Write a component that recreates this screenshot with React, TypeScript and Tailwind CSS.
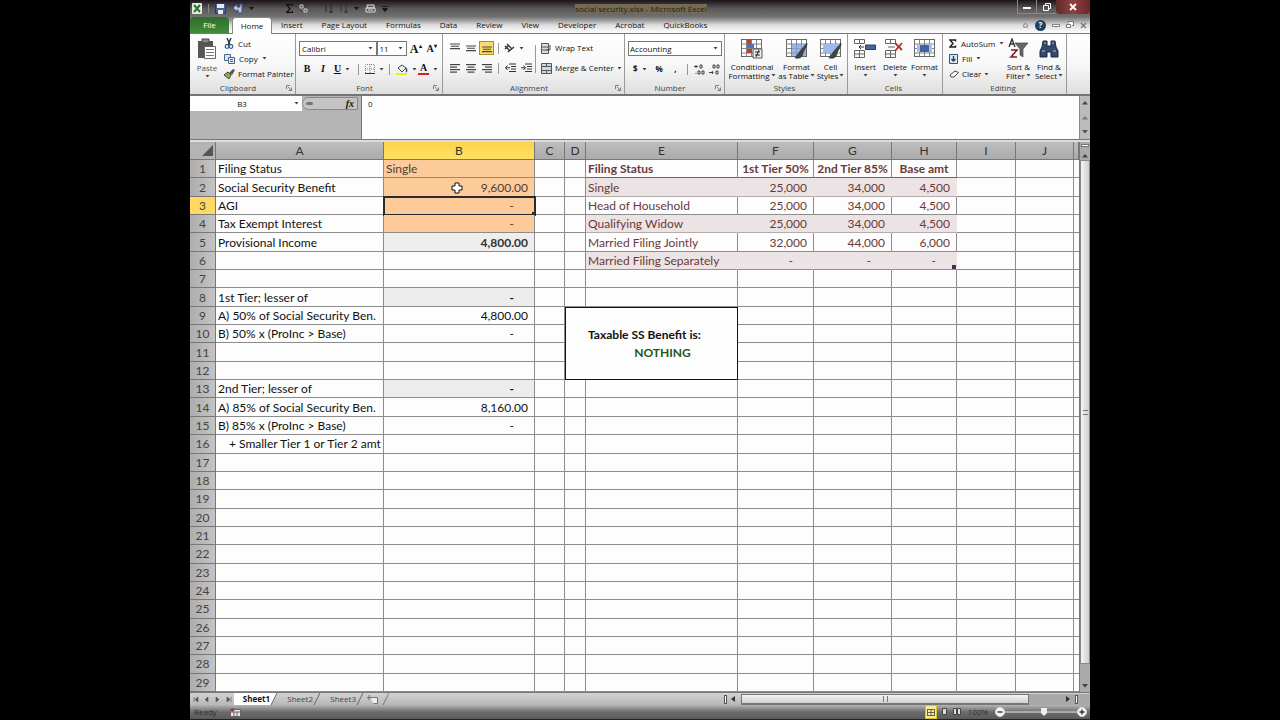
import { useState } from "react";
import type { ReactNode } from "react";

type Row = { a?: string; b?: string; table?: [string, string, string, string] };

const tabs = ["Insert", "Page Layout", "Formulas", "Data", "Review", "View", "Developer", "Acrobat", "QuickBooks"];
const columns = ["A", "B", "C", "D", "E", "F", "G", "H", "I", "J", ""];

const rows: Row[] = [
  { a: "Filing Status", b: "Single", table: ["Filing Status", "1st Tier 50%", "2nd Tier 85%", "Base amt"] },
  { a: "Social Security Benefit", b: "9,600.00", table: ["Single", "25,000", "34,000", "4,500"] },
  { a: "AGI", b: "-", table: ["Head of Household", "25,000", "34,000", "4,500"] },
  { a: "Tax Exempt Interest", b: "-", table: ["Qualifying Widow", "25,000", "34,000", "4,500"] },
  { a: "Provisional Income", b: "4,800.00", table: ["Married Filing Jointly", "32,000", "44,000", "6,000"] },
  { table: ["Married Filing Separately", "-", "-", "-"] },
  {},
  { a: "1st Tier; lesser of", b: "-" },
  { a: "A) 50% of Social Security Ben.", b: "4,800.00" },
  { a: "B) 50% x (ProInc > Base)", b: "-" },
  {},
  {},
  { a: "2nd Tier; lesser of", b: "-" },
  { a: "A) 85% of Social Security Ben.", b: "8,160.00" },
  { a: "B) 85% x (ProInc > Base)", b: "-" },
  { a: "+ Smaller Tier 1 or Tier 2 amt" },
  ...Array.from({ length: 13 }, () => ({})),
];

function Svg({ w, h, box, children }: { w: number; h: number; box?: string; children: ReactNode }) {
  return (
    <svg width={w} height={h} viewBox={box ?? `0 0 ${w} ${h}`} fill="none" className="shrink-0" aria-hidden="true">
      {children}
    </svg>
  );
}

function Caret() {
  return (
    <Svg w={5} h={3}>
      <path d="M0.5 0h4L2.5 2.5z" fill="#444" />
    </Svg>
  );
}

function Launcher() {
  return (
    <Svg w={6} h={6}>
      <path d="M0.5 4V0.5H4M2 2l3 3M5.500 2.500v3h-3" stroke="#666" strokeWidth="0.8" />
    </Svg>
  );
}

function Lines({ rows: widths, align }: { rows: number[]; align: "left" | "center" | "right" }) {
  return (
    <Svg w={10} h={10}>
      {widths.map((w, i) => {
        const x = align === "left" ? 0 : align === "right" ? 10 - w : (10 - w) / 2;
        return <rect key={i} x={x} y={1 + i * 2.5} width={w} height="1.2" fill="#444" />;
      })}
    </Svg>
  );
}

function VAlign({ y }: { y: number }) {
  return (
    <Svg w={10} h={10}>
      <path d={`M0 ${y}h10M1 ${y + 2.3}h8M0 ${y + 4.6}h10`} stroke="#444" strokeWidth="1.1" />
    </Svg>
  );
}

function Grid({ children }: { children?: ReactNode }) {
  return (
    <Svg w={22} h={20}>
      <rect x="0.5" y="0.5" width="20" height="17" fill="#fff" stroke="#666" />
      <path d="M0 5h21M0 9.500h21M0 14h21M5.500 0v18M10.500 0v18M15.500 0v18" stroke="#777" strokeWidth="0.9" />
      {children}
    </Svg>
  );
}

function Brush() {
  return <path d="M21 4l-7 8-5 7c5 1 8-1 8-5l4-8z" fill="#444" stroke="#222" strokeWidth="0.5" />;
}

function Group({ label, width, launcher, children }: { label: string; width: string; launcher?: boolean; children: ReactNode }) {
  return (
    <section aria-label={label} className={`flex shrink-0 flex-col border-r border-[#9a9a9a] ${width}`}>
      <div className="min-h-0 flex-1">{children}</div>
      <div className="flex h-[12px] items-center justify-center pr-[3px]">
        <span className="flex-1 text-center leading-[12px] text-[#444]">{label}</span>
        {launcher ? <Launcher /> : null}
      </div>
    </section>
  );
}

function Tool({ label, children, className = "" }: { label: string; children: ReactNode; className?: string }) {
  return (
    <button type="button" aria-label={label} className={`flex h-[14px] items-center justify-center gap-[4px] ${className}`}>
      {children}
    </button>
  );
}

function BigButton({ icon, lines, className = "" }: { icon: ReactNode; lines: string[]; className?: string }) {
  return (
    <button type="button" className={`flex flex-col items-center pt-[4px] leading-[9px] ${className}`}>
      <span className="mb-[3px] flex h-[21px] items-center">{icon}</span>
      <span>{lines[0]}</span>
      <span className="flex h-[9px] items-center gap-px whitespace-nowrap">
        {lines[1]}
        <Caret />
      </span>
    </button>
  );
}

function TitleBar() {
  return (
    <header className="flex h-[17px] shrink-0 items-center bg-gradient-to-b from-[#1c141b] via-[#5a5759] to-[#727272] text-[8px]">
      <div className="flex flex-1 items-center gap-[6px] pl-[2px]">
        <Svg w={10} h={11}>
          <rect width="10" height="11" rx="1" fill="#e4efe2" />
          <path d="M2 2l6 7M8 2L2 9" stroke="#28762b" strokeWidth="2" />
        </Svg>
        <span className="h-[9px] w-px bg-[#888]" />
        <Svg w={11} h={11}>
          <rect x="0.5" y="0.5" width="10" height="10" fill="#4b5f9c" stroke="#2a376a" />
          <path d="M2 1h7v4H2zM3 7h5v4H3z" fill="#e8ebf5" />
        </Svg>
        <Svg w={11} h={11}>
          <path d="M1 5l4-4v3h3V1h2v9H6V7H5v2z" fill="#b9c3df" stroke="#3f4d80" />
        </Svg>
        <Svg w={5} h={3}><path d="M0 0h5L2.500 3z" fill="#111" /></Svg>
        <span className="w-[20px]" />
        <Svg w={7} h={9}>
          <path d="M6.500 2V0.700H0.800L4 4.500 0.800 8.300h5.700V7" stroke="#111" strokeWidth="1.3" />
        </Svg>
        <Svg w={9} h={9}>
          <path d="M1 1h3v3H1zM5 5h3v3H5z" stroke="#ccc" />
          <path d="M5 1l3 2M1 6l2 2" stroke="#333" />
        </Svg>
        <span className="w-[4px]" />
        <Svg w={9} h={10}>
          <path d="M2 1v7M7 0v8M5 7l2 2 2-2" stroke="#222" />
        </Svg>
        <Svg w={9} h={10}>
          <path d="M2 2v6M7 0v8M5 7l2 2 2-2" stroke="#333" />
        </Svg>
        <Svg w={5} h={3}><path d="M0 0h5L2.500 3z" fill="#111" /></Svg>
        <Svg w={11} h={10}>
          <path d="M2 1h7v3H2zM1 4h9v4H1zM3 6h5" stroke="#ddd" fill="#555" />
        </Svg>
        <Svg w={6} h={6}><path d="M0 0.500h6M0.500 2.500h5L3 5.500z" fill="#111" stroke="#111" strokeWidth="0.800" /></Svg>
      </div>
      <h1 className="bg-[#746a52] text-[8px] text-[#1d1d1d]">social security.xlsx - Microsoft Excel</h1>
      <div className="flex h-full flex-1 items-start justify-end text-white">
        <Tool label="Minimize" className="w-[20px] border-x border-b border-[#888] pt-[3px]">
          <span className="h-[2px] w-[8px] bg-white" />
        </Tool>
        <Tool label="Restore" className="w-[19px] border-b border-[#888]">
          <Svg w={8} h={8}>
            <path d="M2.500 2V0.500h5v5H6M0.500 2.500h5v5h-5z" stroke="#fff" />
          </Svg>
        </Tool>
        <Tool label="Close" className="w-[34px] rounded-b-sm bg-gradient-to-r from-[#5e2c2c] via-[#914040] to-[#6b2626]">
          <Svg w={8} h={8}>
            <path d="M1 1l6 6M7 1L1 7" stroke="#fff" strokeWidth="1.8" />
          </Svg>
        </Tool>
      </div>
    </header>
  );
}

function TabStrip() {
  return (
    <nav className="flex h-[17px] shrink-0 items-end border-b border-[#777] bg-gradient-to-b from-[#747474] via-[#dcdcdc] to-white">
      <button type="button" className="h-[16px] w-[39px] rounded-t-sm bg-gradient-to-b from-[#2f6d2d] to-[#3f8e3a] text-white">
        File
      </button>
      <button type="button" className="-mb-px ml-[3px] h-[17px] w-[40px] rounded-t-sm border-x border-t border-[#888] bg-white">
        Home
      </button>
      {tabs.map((tab) => (
        <button key={tab} type="button" className="h-[16px] pr-[10px] pl-[9px] whitespace-nowrap">
          {tab}
        </button>
      ))}
      <div className="flex h-[16px] flex-1 items-center justify-end gap-[6px] pr-[3px]">
        <Svg w={7} h={6}>
          <path d="M1 4l2.500-3L6 4M1 5h5" stroke="#777" />
        </Svg>
        <span className="flex h-[11px] w-[11px] items-center justify-center rounded-full bg-[#24405f] font-bold text-white">?</span>
        <Svg w={8} h={6}>
          <rect x="0.500" y="2.500" width="7" height="2" stroke="#888" fill="#fff" />
        </Svg>
        <Svg w={8} h={8}>
          <path d="M2.500 2V0.500h5v4H6M0.500 3.500h4v3h-4z" stroke="#777" fill="#fff" />
        </Svg>
        <Svg w={7} h={7}>
          <path d="M1 1l5 5M6 1L1 6" stroke="#777" strokeWidth="1.4" />
        </Svg>
      </div>
    </nav>
  );
}

function Ribbon() {
  return (
    <div className="flex h-[62px] shrink-0 overflow-hidden border-b-2 border-[#757575] bg-gradient-to-b from-white via-[#f8f8f8] to-[#dedede]">
      <Group label="Clipboard" width="w-[106px]" launcher>
        <div className="flex">
          <button type="button" className="flex w-[34px] flex-col items-center gap-[3px] pt-[4px] leading-[9px] text-[#555]">
            <Svg w={20} h={22}>
              <path d="M1 3h15v17H1z" fill="#565656" />
              <path d="M5 1h7v4H5z" fill="#888" stroke="#444" />
              <path d="M7.500 8.500h11v12h-11z" fill="#fff" stroke="#666" />
              <path d="M9 11.500h8M9 14.500h8M9 17.500h8" stroke="#777" />
            </Svg>
            Paste
            <Caret />
          </button>
          <div className="flex flex-col pt-[2px]">
            <button type="button" className="flex h-[15px] items-center gap-[4px]">
              <Svg w={10} h={11}>
                <path d="M3 0l3 7M7 0L4 7" stroke="#333" strokeWidth="1.400" />
                <circle cx="3" cy="8.500" r="1.800" stroke="#2c5f94" strokeWidth="1.200" />
                <circle cx="7" cy="8.500" r="1.800" stroke="#2c5f94" strokeWidth="1.200" />
              </Svg>
              Cut
            </button>
            <button type="button" className="flex h-[15px] items-center gap-[4px]">
              <Svg w={11} h={10}>
                <path d="M0.500 0.500h6v6h-6z" fill="#dbe6f5" stroke="#47678f" />
                <path d="M4.500 3.500h6v6h-6z" fill="#e8effa" stroke="#47678f" />
                <path d="M6 5.500h3M6 7.500h3" stroke="#47678f" />
              </Svg>
              Copy
              <Caret />
            </button>
            <button type="button" className="flex h-[16px] items-center gap-[3px] whitespace-nowrap">
              <Svg w={11} h={10}>
                <path d="M0 6l4-3 3 3-2 4z" fill="#9aa260" stroke="#454b27" />
                <path d="M5 4l4-4 2 1-3 5z" fill="#555" />
              </Svg>
              Format Painter
            </button>
          </div>
        </div>
      </Group>

      <Group label="Font" width="w-[147px]" launcher>
        <div className="px-[3px] pt-[7px]">
          <div className="flex items-center">
            <label className="flex h-[15px] w-[79px] items-center border border-[#777] bg-white pr-[3px]">
              <select aria-label="Font name" defaultValue="Calibri" className="min-w-0 flex-1 appearance-none pl-[2px] outline-none">
                <option>Calibri</option>
              </select>
              <Caret />
            </label>
            <label className="flex h-[15px] w-[30px] items-center border border-[#777] bg-white pr-[3px]">
              <select aria-label="Font size" defaultValue="11" className="min-w-0 flex-1 appearance-none pl-[1px] outline-none">
                <option>11</option>
              </select>
              <Caret />
            </label>
            <Tool label="Grow font" className="w-[17px] font-[Liberation_Serif,serif] text-[12px] font-bold">
              A<span className="-ml-[4px] -mt-[5px] text-[6px]">▴</span>
            </Tool>
            <Tool label="Shrink font" className="w-[15px] font-[Liberation_Serif,serif] text-[10px] font-bold">
              A<span className="-ml-[4px] -mt-[5px] text-[6px]">▾</span>
            </Tool>
          </div>
          <div className="mt-[6px] flex items-center">
            <Tool label="Bold" className="w-[16px] font-[Liberation_Serif,serif] text-[10px] font-bold">B</Tool>
            <Tool label="Italic" className="w-[16px] font-[Liberation_Serif,serif] text-[10px] font-bold italic">I</Tool>
            <Tool label="Underline" className="w-[22px] font-[Liberation_Serif,serif] text-[10px] font-bold">
              <span className="underline">U</span>
              <Caret />
            </Tool>
            <span className="mx-[5px] h-[11px] w-px bg-[#999]" />
            <Tool label="Borders" className="w-[20px]">
              <Svg w={10} h={10}>
                <path d="M0.500 9V0.500h9V9M5 0v9M0 5h10" stroke="#888" strokeDasharray="1 1" />
                <path d="M0 9.500h10" stroke="#333" />
              </Svg>
              <Caret />
            </Tool>
            <span className="mx-[5px] h-[11px] w-px bg-[#999]" />
            <Tool label="Fill colour" className="w-[22px]">
              <Svg w={12} h={11}>
                <path d="M2 4l4-3 4 3-4 4z" fill="#eee" stroke="#444" />
                <path d="M10 4c1 2 1 3 0 4" stroke="#28518a" strokeWidth="1.500" />
                <path d="M0 9h11v2H0z" fill="#f2ee00" />
              </Svg>
              <Caret />
            </Tool>
            <Tool label="Font colour" className="w-[22px]">
              <span className="flex h-[12px] flex-col items-center border-b-2 border-[#d81e1e] px-[2px] font-[Liberation_Serif,serif] text-[10px] leading-[10px] font-bold">
                A
              </span>
              <Caret />
            </Tool>
          </div>
        </div>
      </Group>

      <Group label="Alignment" width="w-[182px]" launcher>
        <div className="flex">
          <div className="flex w-[92px] flex-col gap-[6px] pt-[7px]">
            <div className="flex items-center pl-[4px]">
              <Tool label="Top align" className="w-[16px]"><VAlign y={1} /></Tool>
              <Tool label="Middle align" className="w-[16px]"><VAlign y={3} /></Tool>
              <Tool label="Bottom align" className="w-[15px] border border-[#b18b28] bg-[#fadb6e]"><VAlign y={4} /></Tool>
              <span className="mx-[4px] h-[11px] w-px bg-[#999]" />
              <Tool label="Orientation" className="w-[22px]">
                <Svg w={11} h={11}>
                  <path d="M1 3l5 5M3 1l5 5M1 6l4-4M4 9l6-5" stroke="#333" strokeWidth="1.300" />
                </Svg>
                <Caret />
              </Tool>
            </div>
            <div className="flex items-center pl-[4px]">
              <Tool label="Align left" className="w-[16px]"><Lines rows={[10, 7, 10, 7]} align="left" /></Tool>
              <Tool label="Center" className="w-[16px]"><Lines rows={[10, 7, 10, 7]} align="center" /></Tool>
              <Tool label="Align right" className="w-[16px]"><Lines rows={[10, 7, 10, 7]} align="right" /></Tool>
              <span className="mx-[3px] h-[11px] w-px bg-[#999]" />
              <Tool label="Decrease indent" className="w-[16px]">
                <Svg w={11} h={10}><path d="M4 1h7M6 3.500h5M6 6h5M4 8.500h7M5 4.800H0.500M2.500 2.500L0.500 4.800l2 2.200" stroke="#333" /></Svg>
              </Tool>
              <Tool label="Increase indent" className="w-[16px]">
                <Svg w={11} h={10}><path d="M4 1h7M6 3.500h5M6 6h5M4 8.500h7M0 4.800h4.500M2.500 2.500l2 2.300-2 2.200" stroke="#333" /></Svg>
              </Tool>
            </div>
          </div>
          <span className="mt-[11px] h-[28px] w-px bg-[#999]" />
          <div className="flex flex-col items-start gap-[6px] pt-[7px] pl-[5px] whitespace-nowrap">
            <button type="button" className="flex h-[14px] items-center gap-[3px]">
              <Svg w={11} h={11}><path d="M0.500 0.500h7v10h-7zM0 4h8M0 7h8M9 2v5H5" stroke="#555" fill="#ddd" /></Svg>
              Wrap Text
            </button>
            <button type="button" className="flex h-[14px] items-center gap-[3px]">
              <Svg w={11} h={11}><path d="M0.500 0.500h10v10h-10zM0 3.500h11M0 7.500h11M5.500 0v3M5.500 8v3" stroke="#555" fill="#cdd6e6" /></Svg>
              Merge &amp; Center
              <Caret />
            </button>
          </div>
        </div>
      </Group>

      <Group label="Number" width="w-[100px]" launcher>
        <div className="px-[3px] pt-[7px]">
          <label className="flex h-[15px] w-[94px] items-center border border-[#777] bg-white pr-[3px]">
            <select aria-label="Number format" defaultValue="Accounting" className="min-w-0 flex-1 appearance-none pl-[1px] outline-none">
              <option>Accounting</option>
            </select>
            <Caret />
          </label>
          <div className="mt-[6px] flex items-center font-bold">
            <Tool label="Accounting format" className="w-[24px]">$<Caret /></Tool>
            <Tool label="Percent" className="w-[15px]">%</Tool>
            <Tool label="Comma" className="w-[18px]">,</Tool>
            <span className="mx-[3px] h-[11px] w-px bg-[#999]" />
            <Tool label="Increase decimal" className="w-[16px]">
              <Svg w={11} h={11}><path d="M0 2.500h4M2 1v3M6 1h2v3H6zM4 7h2v3H4zM8 7h2v3H8zM2 9v1" stroke="#444" /></Svg>
            </Tool>
            <Tool label="Decrease decimal" className="w-[14px]">
              <Svg w={11} h={11}><path d="M4 1h2v3H4zM8 1h2v3H8zM0 8.500h4M3 7l1 1.500L3 10M7 7h2v3H7z" stroke="#444" /></Svg>
            </Tool>
          </div>
        </div>
      </Group>

      <Group label="Styles" width="w-[123px]">
        <div className="flex">
          <BigButton
            className="w-[54px]"
            lines={["Conditional", "Formatting"]}
            icon={
              <Grid>
                <path d="M6 1h4v4H6z" fill="#c43b2f" />
                <path d="M6 5h7v4H6z" fill="#5072b8" />
                <path d="M6 10h5v4H6z" fill="#c43b2f" />
                <path d="M12 10h9v9h-9z" fill="#eee" stroke="#555" />
                <path d="M14 13h5M14 16h5M18 11l-3 7" stroke="#222" />
              </Grid>
            }
          />
          <BigButton
            className="w-[35px]"
            lines={["Format", "as Table"]}
            icon={<Grid><path d="M6 5h14v12H6z" fill="#7d9fdc" opacity="0.75" /><Brush /></Grid>}
          />
          <BigButton
            className="w-[33px]"
            lines={["Cell", "Styles"]}
            icon={<Grid><path d="M3 5h15v9H3z" fill="#9db8ea" /><Brush /></Grid>}
          />
        </div>
      </Group>

      <Group label="Cells" width="w-[95px]">
        <div className="flex pl-[2px]">
          <BigButton
            className="w-[30px]"
            lines={["Insert", ""]}
            icon={
              <Svg w={22} h={20}>
                <path d="M0.500 0.500h10v4h-10zM5.500 0v5M0.500 11.500h10v7h-10zM5.500 11v8M0 15h11" stroke="#666" />
                <path d="M11.500 6h10v4.500h-10z" fill="#45669f" stroke="#253a62" />
                <path d="M10 8H5M7 6L5 8l2 2" stroke="#333" />
              </Svg>
            }
          />
          <BigButton
            className="w-[30px]"
            lines={["Delete", ""]}
            icon={
              <Svg w={20} h={20}>
                <path d="M0.500 0.500h10v4h-10zM5.500 0v5M0.500 11.500h10v7h-10zM5.500 11v8M0 15h11M3 8h7" stroke="#666" />
                <path d="M10 4l7 7M17 4l-7 8" stroke="#c12828" strokeWidth="1.800" />
              </Svg>
            }
          />
          <BigButton
            className="w-[29px]"
            lines={["Format", ""]}
            icon={<Grid><path d="M6 6h9v7H6z" fill="#3f62ab" /><path d="M3 5h3v8H3zM15 5h3v8h-3z" fill="#a9bfe8" /></Grid>}
          />
        </div>
      </Group>

      <Group label="Editing" width="w-[124px]">
        <div className="flex">
          <div className="flex w-[60px] flex-col items-start pt-[2px] pl-[6px]">
            <button type="button" className="flex h-[15px] items-center gap-[4px]">
              <Svg w={8} h={9}><path d="M6.500 2.500V1H1l3 3.500L1 8h5.500V6.500" stroke="#222" strokeWidth="1.500" /></Svg>
              AutoSum
              <Caret />
            </button>
            <button type="button" className="flex h-[15px] items-center gap-[4px]">
              <Svg w={9} h={10}>
                <path d="M0.500 0.500h8v9h-8z" fill="#dce6f4" stroke="#35557f" />
                <path d="M4.500 2v5M2.500 5l2 2 2-2" stroke="#203d66" strokeWidth="1.300" />
              </Svg>
              Fill
              <Caret />
            </button>
            <button type="button" className="flex h-[16px] items-center gap-[3px]">
              <Svg w={10} h={8}><path d="M1 5l5-4 3.500 1.500L5 7H2z" fill="#fff" stroke="#444" /></Svg>
              Clear
              <Caret />
            </button>
          </div>
          <BigButton
            className="w-[31px]"
            lines={["Sort &", "Filter"]}
            icon={
              <Svg w={21} h={21}>
                <path d="M7 5h13l-5 6v8l-3-2v-6z" fill="#666" stroke="#333" strokeWidth="0.600" />
                <path d="M1 9l3-8 3 8M2 6h4" stroke="#333" strokeWidth="1.400" />
                <path d="M3 12h6l-6 7h6" stroke="#722" strokeWidth="1.600" />
              </Svg>
            }
          />
          <BigButton
            className="w-[30px]"
            lines={["Find &", "Select"]}
            icon={
              <Svg w={20} h={20}>
                <path d="M4 2h4v5h4V2h4l1 6 2 4v6h-7v-5H8v5H1v-6l2-4z" fill="#34496b" stroke="#1b2b45" />
                <path d="M3 12h3M14 12h3M5 4h2M13 4h2" stroke="#b7c5de" />
              </Svg>
            }
          />
        </div>
      </Group>
    </div>
  );
}

function FormulaBar() {
  return (
    <div className="flex h-[44px] shrink-0 border-b border-[#777] bg-[#b5b5b5]">
      <div className="flex h-[15px] w-[171px] items-center pr-[3px]">
        <div className="flex h-full w-[112px] items-center bg-white pr-[3px]">
          <input aria-label="Name box" defaultValue="B3" className="min-w-0 flex-1 bg-transparent text-center outline-none" />
          <Caret />
        </div>
        <div className="flex h-[13px] flex-1 items-center justify-between rounded-l-full border border-[#888] bg-[#c4c4c4] px-[3px] font-[Liberation_Serif,serif] text-[10px] font-bold italic">
          <span className="h-[3px] w-[7px] rounded-full bg-[#777]" />
          fx
        </div>
      </div>
      <textarea aria-label="Formula" defaultValue="0" className="min-w-0 flex-1 resize-none border-l border-[#777] bg-[#fdfdfd] px-[6px] py-[2px] leading-[12px] outline-none" />
      <div className="flex w-[11px] flex-col items-center justify-between border-l border-[#888] bg-[#bbb] py-[5px]">
        <Svg w={6} h={4}><path d="M0 3.500L3 0l3 3.500" fill="#444" /></Svg>
        <Svg w={6} h={4}><path d="M0 3.500L3 0l3 3.500" fill="#777" /></Svg>
        <Svg w={6} h={4}><path d="M0 0l3 3.500L6 0" fill="#555" /></Svg>
      </div>
    </div>
  );
}

const line = "border-r border-b border-[#8c8c8c]";

function inputCell(i: number) {
  if (i < 4) return "bg-[#fdca99] text-[#4f4038]";
  if (i === 4) return "bg-[#eeeeee] font-bold text-[#333]";
  if (i === 7 || i === 12) return "bg-[#ececec] font-bold";
  return "";
}

function tableLine(index: number) {
  if (index === 0) return "border-r border-b border-r-[#8c8c8c] border-b-[#8a5a5a] font-bold";
  if (index === 5) return "border-r border-b border-r-[#ece3e4] border-b-[#b98080]";
  if (index % 2 === 1) return "border-r border-b border-r-[#ece3e4] border-b-[#b5abab]";
  return line;
}

function SheetRow({ row, index }: { row: Row; index: number }) {
  const active = index === 2;
  const dash = row.b === "-";
  const inBox = index > 7 && index < 12;
  const banded = row.table && index % 2 === 1;
  return (
    <tr className="h-[18px]">
      <th scope="row" className={`border-r border-b border-[#777] px-0 pt-px pb-0 font-normal ${active ? "bg-[#ffd960]" : "bg-gradient-to-r from-[#adadad] to-[#c4c4c4]"} text-[#444]`}>
        {index + 1}
      </th>
      <td className={`${line} overflow-hidden pt-px ${index === 15 ? "pl-[13px]" : "pl-[2px]"}`}>{row.a}</td>
      <td
        className={`${line} relative pt-px ${inputCell(index)} ${index === 0 ? "pl-[2px]" : dash ? "pr-[20px] text-right" : "pr-[6px] text-right"} ${active ? "outline-2 -outline-offset-1 outline-[#2b2b2b]" : ""}`}
      >
        {row.b}
        {index === 1 ? (
          <span className="absolute top-[4px] left-[67px]">
            <Svg w={12} h={12}>
              <path d="M4 1h4v3h3v4H8v3H4V8H1V4h3z" fill="#fff" stroke="#111" />
            </Svg>
          </span>
        ) : null}
        {active ? <span className="absolute -right-[2px] -bottom-[2px] h-[4px] w-[4px] bg-[#2b2b2b]" /> : null}
      </td>
      <td className={line} />
      {index === 8 ? (
        <td rowSpan={4} colSpan={2} className="border border-[#111] p-0 align-middle leading-[18px] font-bold">
          <div className="pt-px pl-[22px]">
            <p>Taxable SS Benefit is:</p>
            <p className="text-center text-[#1d5620]">NOTHING</p>
          </div>
        </td>
      ) : null}
      {inBox ? null : <td className={line} />}
      {inBox || row.table ? null : <td className={line} />}
      {row.table
        ? row.table.map((text, i) => (
            <td
              key={i}
              className={`relative pt-px ${tableLine(index)} ${banded ? "bg-[#ece3e4]" : ""} text-[#6b3a38] ${i === 0 ? "pl-[2px]" : index === 0 ? "text-center" : text === "-" ? "pr-[20px] text-right" : "pr-[6px] text-right"}`}
            >
              {text}
              {index === 5 && i === 3 ? <span className="absolute right-0 bottom-0 h-[4px] w-[4px] bg-[#3b3556]" /> : null}
            </td>
          ))
        : [0, 1, 2].map((i) => <td key={i} className={line} />)}
      <td className={line} />
      <td className={line} />
      <td className="border-b border-[#8c8c8c]" />
    </tr>
  );
}

function Sheet() {
  return (
    <div className="flex min-h-0 flex-1 border-t-2 border-[#ddd]">
      <div className="min-w-0 flex-1 overflow-hidden">
        <table className="h-full w-full table-fixed border-separate border-spacing-0 bg-[#fdfdfd] font-[Lato,sans-serif] text-[12px] leading-[16px] whitespace-nowrap text-[#111]">
          <colgroup>
            <col className="w-[26px]" />
            <col className="w-[168px]" />
            <col className="w-[151px]" />
            <col className="w-[30px]" />
            <col className="w-[21px]" />
            <col className="w-[152px]" />
            <col className="w-[76px]" />
            <col className="w-[78px]" />
            <col className="w-[65px]" />
            <col className="w-[59px]" />
            <col className="w-[58px]" />
            <col />
          </colgroup>
          <thead>
            <tr className="h-[18px]">
              <th className="border-r border-b border-[#777] bg-[#b4b4b4] p-0">
                <div className="flex justify-end pr-[2px]">
                  <Svg w={11} h={11}><path d="M11 0v11H0z" fill="#555" /></Svg>
                </div>
              </th>
              {columns.map((name, i) => (
                <th
                  key={i}
                  scope="col"
                  className={`border-r border-b border-[#777] px-0 pt-px pb-0 font-normal text-[#333] ${name === "B" ? "bg-gradient-to-b from-[#fbd24e] to-[#ffe262]" : "bg-gradient-to-b from-[#bebebe] to-[#ababab]"}`}
                >
                  {name}
                </th>
              ))}
            </tr>
          </thead>
          <tbody>
            {rows.map((row, i) => (
              <SheetRow key={i} row={row} index={i} />
            ))}
          </tbody>
        </table>
      </div>
      <div className="flex w-[11px] flex-col items-center border-l border-[#777] bg-[#aaa]">
        <div className="flex h-[18px] flex-col items-center justify-between py-[2px]">
          <span className="h-[3px] w-[8px] border border-[#777] bg-white" />
          <Svg w={6} h={4}><path d="M0 3.500L3 0l3 3.500" fill="#444" /></Svg>
        </div>
        <div className="flex w-full flex-1 items-center justify-center border border-[#888] bg-gradient-to-r from-[#f4f4f4] to-[#cfcfcf]">
          <span className="h-[5px] w-[5px] border-y border-[#777]" />
        </div>
        <div className="flex h-[28px] items-end pb-[4px]">
          <Svg w={6} h={4}><path d="M0 0l3 3.500L6 0" fill="#444" /></Svg>
        </div>
      </div>
    </div>
  );
}

function SheetTabs({ current, onSelect }: { current: string; onSelect: (name: string) => void }) {
  return (
    <div className="flex h-[13px] shrink-0 items-center border-t border-[#777] bg-gradient-to-b from-[#d2d2d2] to-[#b8b8b8]">
      <div className="flex w-[44px] items-center justify-around">
        {["M1 0v5M5 0L2 2.500 5 5z", "M4 0L1 2.500 4 5z", "M1 0l3 2.500L1 5z", "M5 0v5M1 0l3 2.500L1 5z"].map((d) => (
          <Svg key={d} w={6} h={5}><path d={d} fill="#555" stroke="#555" strokeWidth="0.600" /></Svg>
        ))}
      </div>
      {["Sheet1", "Sheet2", "Sheet3"].map((name) => (
        <button
          key={name}
          type="button"
          onClick={() => onSelect(name)}
          className={`flex h-[12px] items-center leading-[12px] ${name === current ? "font-bold" : "text-[#444]"}`}
        >
          <span className={`flex h-[12px] w-[36px] items-center justify-end ${name === current ? "bg-white" : ""}`}>{name}</span>
          <Svg w={7} h={12}>
            <path d="M0 0h7L1 12H0z" fill={name === current ? "#fff" : "none"} />
            <path d="M7 0L1 12" stroke="#666" />
          </Svg>
        </button>
      ))}
      <Tool label="Insert sheet" className="w-[30px]">
        <Svg w={11} h={9}>
          <path d="M3.500 2.500h7v6h-4" stroke="#777" fill="#eee" />
          <path d="M2 0v5M0 2.500h5" stroke="#8a6a2a" />
        </Svg>
        <Svg w={7} h={12}><path d="M7 0L1 12" stroke="#777" /></Svg>
      </Tool>
      <div className="flex-1" />
      <div className="flex h-[12px] w-[368px] items-center">
        <div className="flex w-[19px] items-center gap-[4px] pl-[2px]">
          <span className="h-[9px] w-[3px] border border-[#555] bg-white" />
          <Svg w={4} h={6}><path d="M4 0v6L0 3z" fill="#333" /></Svg>
        </div>
        <div className="flex h-[11px] flex-1 items-center justify-center border border-b-2 border-[#777] bg-gradient-to-b from-[#f5f5f5] to-[#d0d0d0]">
          <span className="h-[6px] w-[5px] border-x border-[#777]" />
        </div>
        <div className="flex h-[11px] w-[61px] items-center justify-end gap-[5px] bg-[#a8a8a8] pr-[12px]">
          <Svg w={4} h={6}><path d="M0 0v6l4-3z" fill="#333" /></Svg>
          <span className="h-[9px] w-[3px] border border-[#555] bg-white" />
        </div>
      </div>
    </div>
  );
}

function ZoomKnob({ sign }: { sign: "minus" | "plus" }) {
  return (
    <button type="button" aria-label={sign === "minus" ? "Zoom out" : "Zoom in"}>
      <Svg w={10} h={10}>
        <circle cx="5" cy="5" r="4.500" fill="#f4f4f4" stroke="#ddd" />
        <path d={sign === "minus" ? "M2.500 5h5" : "M2.500 5h5M5 2.500v5"} stroke="#333" strokeWidth="1.400" />
      </Svg>
    </button>
  );
}

function StatusBar() {
  return (
    <footer className="flex h-[15px] shrink-0 items-center border-b border-[#222] bg-gradient-to-b from-[#b5b5b5] via-[#6c6c6c] to-[#5a5a5a] pr-[3px] pl-[4px] text-[#2e2e2e]">
      <span className="w-[36px]">Ready</span>
      <Svg w={11} h={9}>
        <path d="M0.500 1.500h10v7h-10z" fill="#e6e6ee" stroke="#666" />
        <path d="M0 4h11M4 4v5M7 4v5" stroke="#667" />
        <circle cx="2.500" cy="2" r="1.800" fill="#a33" />
      </Svg>
      <div className="flex-1" />
      <div className="flex items-center gap-[5px]">
        <Tool label="Normal view" className="h-[12px] w-[12px] border border-[#d8c432] bg-[#f6eb96]">
          <Svg w={8} h={7}><path d="M0 0.500h8M0 3.500h8M0 6.500h8M0.500 0v7M4 0v7M7.500 0v7" stroke="#554" strokeWidth="0.900" /></Svg>
        </Tool>
        <Svg w={6} h={8}><path d="M0.500 0.500h4v6h-4z" fill="#ddd" stroke="#444" /></Svg>
        <Svg w={8} h={8}><path d="M0.500 0.500h3v6h-3zM4.500 0.500h3v6h-3z" fill="#ddd" stroke="#444" /></Svg>
        <span className="w-[24px] text-center">100%</span>
        <div className="flex items-center">
          <ZoomKnob sign="minus" />
          <span className="h-[2px] w-[36px] bg-[#aaa]" />
          <Svg w={6} h={8}><path d="M0 0h6v5L3 8 0 5z" fill="#eee" /></Svg>
          <span className="h-[2px] w-[30px] bg-[#aaa]" />
          <ZoomKnob sign="plus" />
        </div>
      </div>
    </footer>
  );
}

export default function App() {
  const [sheet, setSheet] = useState("Sheet1");

  return (
    <div className="flex h-screen justify-center bg-black font-['Open_Sans','Noto_Sans',sans-serif] text-[8px] leading-[10px] text-[#111]">
      <main className="flex w-full max-w-[900px] flex-col overflow-hidden bg-[#bbb]">
        <TitleBar />
        <TabStrip />
        <Ribbon />
        <FormulaBar />
        <Sheet />
        <SheetTabs current={sheet} onSelect={setSheet} />
        <StatusBar />
      </main>
    </div>
  );
}
